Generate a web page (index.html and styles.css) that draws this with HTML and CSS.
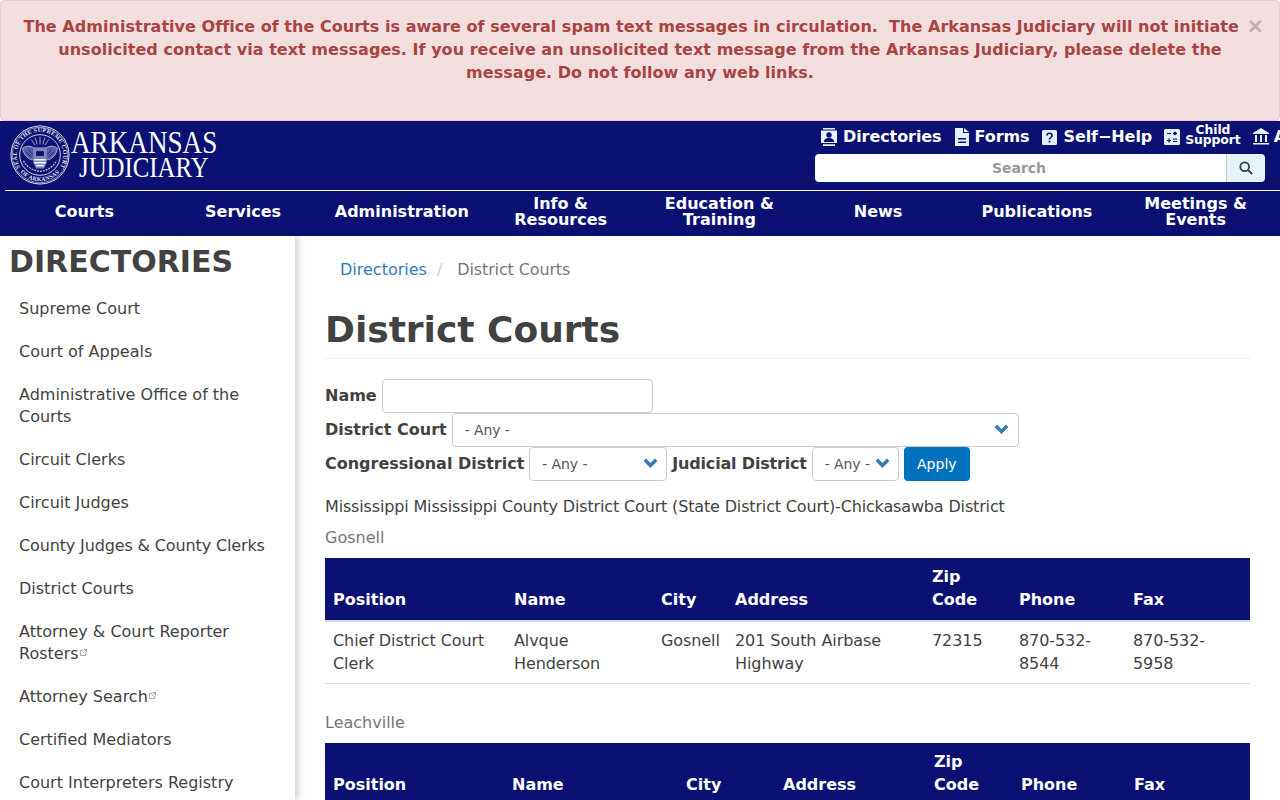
FILE: index.html
```html
<!DOCTYPE html>
<html lang="en">
<head>
<meta charset="utf-8">
<title>District Courts</title>
<link rel="stylesheet" href="styles.css">
</head>
<body>
<div class="alert">
  <span class="close">×</span>
  <p>The Administrative Office of the Courts is aware of several spam text messages in circulation.&nbsp; The Arkansas Judiciary will not initiate unsolicited contact via text messages. If you receive an unsolicited text message from the Arkansas Judiciary, please delete the message. Do not follow any web links.</p>
</div>
<header class="site-header">
  <div class="top">
    <a class="brand" href="#">
      <svg class="seal" viewBox="0 0 62 62" width="60" height="60">
        <defs>
          <path id="arcTop" d="M12.600 46.400A24 24 0 1 1 49.400 46.400"/>
          <path id="arcBot" d="M7.600 44.500A27 27 0 0 0 54.400 44.500"/>
        </defs>
        <circle cx="31" cy="31" r="30" fill="none" stroke="#e8eaf4" stroke-width="1"/>
        <circle cx="31" cy="31" r="28.600" fill="none" stroke="#e8eaf4" stroke-width=".6"/>
        <circle cx="31" cy="31" r="21" fill="none" stroke="#e8eaf4" stroke-width=".9"/>
        <text class="seal-text"><textPath href="#arcTop" startOffset="50%" text-anchor="middle">SEAL OF THE SUPREME COURT</textPath></text>
        <text class="seal-text"><textPath href="#arcBot" startOffset="50%" text-anchor="middle">OF ARKANSAS</textPath></text>
        <path d="M31 12v8M26 13l2 7M36 13l-2 7M22 15l4 6M40 15l-4 6" stroke="#9ea3cf" stroke-width="1"/>
        <path d="M13 24c4-3 10-3 14 2-1 4-2 7-3 10-5 0-10-5-11-12zM49 24c-4-3-10-3-14 2 1 4 2 7 3 10 5 0 10-5 11-12z" fill="#5a60a8" stroke="#c6cae4" stroke-width=".8"/>
        <path d="M16 27l6 6M19 25l5 6M46 27l-6 6M43 25l-5 6" stroke="#0a1172" stroke-width=".8"/>
        <path d="M24 23h14v16l-3 6h-8l-3-6z" fill="#7f85bf"/>
        <path d="M25 36h12M25 39h12M27 42h8" stroke="#f6f7fc" stroke-width="1.500"/>
        <path d="M27 27h8v5h-8z" fill="#0a1172"/>
        <path d="M14 37c3 6 9 10 17 11 8-1 14-5 17-11" fill="none" stroke="#c6cae4" stroke-width="1.200" stroke-dasharray="2 1"/>
      </svg>
      <span class="wordmark"><span class="w1">ARKANSAS</span><span class="w2">JUDICIARY</span></span>
    </a>
    <div class="tools">
      <div class="links">
        <a href="#"><svg class="ic" viewBox="0 0 16 18" width="16" height="18"><path fill="#e3f1fa" d="M2 0h12v1.500H2zM0 2.500h16V15H0zM2 16.200h12V18H2z"/><circle cx="8" cy="7" r="2.700" fill="#0a1172"/><path fill="#0a1172" d="M3 14c0-3 2-4 5-4s5 1 5 4z"/></svg>Directories</a>
        <a href="#"><svg class="ic" viewBox="0 0 14 18" width="14" height="18"><path fill="#e3f1fa" d="M0 0h8v5h6v13H0zM9 0l5 4H9z"/><path fill="#0a1172" d="M3 10h8v1.500H3zM3 13.500h8V15H3z"/></svg>Forms</a>
        <a href="#"><svg class="ic" viewBox="0 0 15 15" width="15" height="15"><rect width="15" height="15" rx="1.500" fill="#e3f1fa"/><path d="M5 5.500c0-3 5-3 5 0 0 2-2.500 2-2.500 4" fill="none" stroke="#0a1172" stroke-width="1.600"/><rect x="6.700" y="10.800" width="1.700" height="1.700" fill="#0a1172"/></svg>Self−Help</a>
        <a class="l-child" href="#"><svg class="ic" viewBox="0 0 16 16" width="16" height="16"><rect width="16" height="16" rx="1.500" fill="#e3f1fa"/><path d="M3 4.500h4M9 4.500h4M3 11.500h4M5 9.500v4M9 10h4M9 12.500h4M10 3l2 3M12 3l-2 3" stroke="#0a1172" stroke-width="1.200"/></svg><span class="stack">Child<br>Support</span></a>
        <a class="l-admin" href="#"><svg class="ic" viewBox="0 0 18 18" width="18" height="18"><path fill="#e3f1fa" d="M9 0l8 5v1H1V5zM3 7h2v7H3zM8 7h2v7H8zM13 7h2v7h-2zM1 15h16v1.500H1z"/></svg>Administration</a>
      </div>
      <form class="search">
        <input class="search-input" type="text" placeholder="Search">
        <button class="search-btn" type="button" aria-label="Search"><svg viewBox="0 0 16 16" width="14" height="14"><circle cx="6.500" cy="6.500" r="5" fill="none" stroke="#2a3b4a" stroke-width="2"/><path d="M10.500 10.500L15 15" stroke="#2a3b4a" stroke-width="2.200"/></svg></button>
      </form>
    </div>
  </div>
  <nav class="mainnav">
    <a href="#">Courts</a>
    <a href="#">Services</a>
    <a href="#">Administration</a>
    <a href="#">Info &amp; Resources</a>
    <a href="#">Education &amp; Training</a>
    <a href="#">News</a>
    <a href="#">Publications</a>
    <a href="#">Meetings &amp; Events</a>
  </nav>
</header>
<div class="layout">
  <aside class="sidebar">
    <h2>DIRECTORIES</h2>
    <ul>
      <li><a href="#">Supreme Court</a></li>
      <li><a href="#">Court of Appeals</a></li>
      <li><a href="#">Administrative Office of the Courts</a></li>
      <li><a href="#">Circuit Clerks</a></li>
      <li><a href="#">Circuit Judges</a></li>
      <li class="tight"><a href="#">County Judges &amp; County Clerks</a></li>
      <li><a href="#">District Courts</a></li>
      <li><a href="#">Attorney &amp; Court Reporter Rosters<svg class="ext" viewBox="0 0 8 8" width="8" height="8"><path d="M6.500 4.500v3h-6v-6h3M4 .5h3.500V4M7.500.5L3.500 4.500" fill="none" stroke="#777" stroke-width=".8"/></svg></a></li>
      <li><a href="#">Attorney Search<svg class="ext" viewBox="0 0 8 8" width="8" height="8"><path d="M6.500 4.500v3h-6v-6h3M4 .5h3.500V4M7.500.5L3.500 4.500" fill="none" stroke="#777" stroke-width=".8"/></svg></a></li>
      <li><a href="#">Certified Mediators</a></li>
      <li><a href="#">Court Interpreters Registry</a></li>
    </ul>
  </aside>
  <main class="content">
    <ol class="crumbs">
      <li><a href="#">Directories</a></li>
      <li class="sep">/</li>
      <li class="here">District Courts</li>
    </ol>
    <h1>District Courts</h1>
    <form class="filters">
      <div class="frow"><label>Name</label><input class="name-input" type="text"></div>
      <div class="frow"><label>District Court</label><span class="sel sel-court">- Any -<svg class="chev" viewBox="0 0 15 10" width="15" height="10"><path d="M1.800 1.800L7.500 7.500 13.200 1.800" fill="none" stroke="#337ab7" stroke-width="3.400"/></svg></span></div>
      <div class="frow"><label class="l-cong">Congressional District</label><span class="sel sel-cong">- Any -<svg class="chev" viewBox="0 0 15 10" width="15" height="10"><path d="M1.800 1.800L7.500 7.500 13.200 1.800" fill="none" stroke="#337ab7" stroke-width="3.400"/></svg></span><label class="l-jud">Judicial District</label><span class="sel sel-jud">- Any -<svg class="chev" viewBox="0 0 15 10" width="15" height="10"><path d="M1.800 1.800L7.500 7.500 13.200 1.800" fill="none" stroke="#337ab7" stroke-width="3.400"/></svg></span><button class="apply" type="button">Apply</button></div>
    </form>
    <p class="court-title">Mississippi Mississippi County District Court (State District Court)-Chickasawba District</p>
    <section class="group">
      <div class="caption">Gosnell</div>
      <table class="dir t-one">
        <colgroup><col class="c1"><col class="c2"><col class="c3"><col class="c4"><col class="c5"><col class="c6"><col class="c7"></colgroup>
        <thead><tr><th>Position</th><th>Name</th><th>City</th><th>Address</th><th>Zip Code</th><th>Phone</th><th>Fax</th></tr></thead>
        <tbody><tr><td>Chief District Court Clerk</td><td>Alvque Henderson</td><td>Gosnell</td><td>201 South Airbase Highway</td><td>72315</td><td>870-532-8544</td><td>870-532-5958</td></tr></tbody>
      </table>
    </section>
    <section class="group">
      <div class="caption">Leachville</div>
      <table class="dir t-two">
        <colgroup><col class="c1"><col class="c2"><col class="c3"><col class="c4"><col class="c5"><col class="c6"><col class="c7"></colgroup>
        <thead><tr><th>Position</th><th>Name</th><th>City</th><th>Address</th><th>Zip Code</th><th>Phone</th><th>Fax</th></tr></thead>
      </table>
    </section>
  </main>
</div>
</body>
</html>
```
FILE: styles.css
```css
* { box-sizing: border-box; }
html, body { margin: 0; height: 800px; overflow: hidden; }
body { font-family: "DejaVu Sans", sans-serif; font-size: 16px; line-height: 22.86px; color: #424242; background: #fff; }
a { text-decoration: none; color: inherit; }

.alert { height: 121px; padding: 15px; background: #f2dede; border: 1px solid #ebccd1; border-radius: 4px; color: #a94442; font-weight: 700; text-align: center; letter-spacing: .035px; }
.alert p { margin: 0; }
.close { float: right; font-size: 21px; line-height: 21px; font-weight: 700; color: #c4adad; letter-spacing: 0; }

.site-header { background: #0a1172; color: #fff; height: 115px; }
.top { display: flex; height: 70px; margin-left: 5px; border-bottom: 1px solid #fff; }
.brand { display: flex; align-items: flex-start; width: 810px; padding: 4px 0 0 5px; }
.seal { flex: none; margin-right: 1px; }
.seal-text { font-family: "Liberation Serif", serif; font-size: 6px; font-weight: 700; letter-spacing: .35px; fill: #e8eaf4; }
.wordmark { display: flex; flex-direction: column; margin: 6px 0 0; font-family: "Liberation Serif", serif; line-height: 25px; }
.w1, .w2 { display: block; width: 140px; white-space: nowrap; transform-origin: 0 50%; }
.w1 { font-size: 30.500px; transform: scaleX(.89); }
.w2 { font-size: 29px; margin: -1px 0 0 8px; transform: scaleX(.856); }
.tools { flex: 1; min-width: 0; }
.links { display: flex; gap: 13px; height: 33px; padding: 5px 0 0 6px; white-space: nowrap; font-weight: 700; overflow: hidden; font-size: 16px; letter-spacing: -.08px; }
.links a { display: flex; align-items: center; gap: 6px; height: 22px; flex: none; }
.links .l-child { margin-left: -1px; gap: 5px; }
.links .l-admin { margin-left: -2px; gap: 4px; }
.ic { flex: none; }
.stack { font-size: 12.400px; line-height: 10px; text-align: center; margin-bottom: 4px; }
.search { display: flex; width: 450px; height: 28px; }
.search-input { flex: 1; min-width: 0; border: 0; border-radius: 4px 0 0 4px; font: 700 14px "DejaVu Sans", sans-serif; text-align: center; padding: 0 3px 0 0; background: #fff; }
.search-input::placeholder { color: #999; opacity: 1; }
.search-btn { width: 39px; padding: 0; border: 0; border-left: 1px solid #ccc; border-radius: 0 4px 4px 0; background: #e8f3f9; display: flex; align-items: center; justify-content: center; }

.mainnav { display: grid; grid-template-columns: repeat(8, minmax(0, 1fr)); height: 45px; padding: 0 5px 4px; align-items: center; }
.mainnav a { font-weight: 700; line-height: 16px; text-align: center; padding: 0 8px; }

.layout { display: flex; }
.sidebar { flex: none; width: 295px; height: 564px; padding: 9px 0 0 9px; box-shadow: 3px 0 8px rgba(0,0,0,.2); }
.sidebar h2 { margin: 0 0 20px; font-size: 30px; line-height: 33px; font-weight: 700; }
.sidebar ul { margin: 0; padding: 0 20px 0 10px; list-style: none; line-height: 22px; }
.sidebar li { padding: 0 0 21px; }
.sidebar a { display: block; }
.sidebar .tight { letter-spacing: -.14px; }
.ext { margin-left: 1px; vertical-align: 3px; width: 7px; height: 7px; }

.content { flex: 1; min-width: 0; padding: 23px 30px 0; }
.crumbs { display: flex; gap: 10px; margin: 0; padding: 0 0 0 15px; list-style: none; }
.crumbs a { color: #337ab7; }
.sep { color: #ccc; margin-right: 5px; }
.here { color: #777; letter-spacing: -.13px; }
h1 { margin: 28px 0 20px; padding-bottom: 8px; border-bottom: 1px solid #eee; font-size: 36px; line-height: 40px; font-weight: 700; }

.frow { display: flex; align-items: center; height: 34px; gap: 5px; }
.frow label { font-weight: 700; padding-top: 1px; }
.frow .l-cong { letter-spacing: -.01px; }
.frow .l-jud { letter-spacing: -.18px; }
.name-input { width: 271px; height: 34px; border: 1px solid #ccc; border-radius: 4px; background: #fff; }
.sel { position: relative; display: flex; align-items: center; height: 34px; padding: 2px 0 0 12px; border: 1px solid #ccc; border-radius: 4px; font-size: 14px; letter-spacing: -.1px; color: #555; background: #fff; }
.sel-court { width: 567px; }
.sel-cong { width: 138px; }
.sel-jud { width: 87px; }
.chev { position: absolute; right: 8px; top: 10px; }
.sel-court .chev { right: 9px; }
.apply { height: 34px; width: 66px; border: 0; border-radius: 4px; background: #0071bc; color: #fff; font: 14px "DejaVu Sans", sans-serif; }

.court-title { margin: 15px 0 8px; letter-spacing: -.157px; }
.caption { color: #777; padding-bottom: 8px; }
.group { margin-bottom: 28px; }
.dir { width: 100%; border-collapse: collapse; table-layout: fixed; }
.dir th { padding: 7px 8px 9px; background: #0a1172; color: #fff; text-align: left; vertical-align: bottom; font-weight: 700; line-height: 23px; border-bottom: 2px solid #ddd; }
.dir td { padding: 7px 8px 8.700px; vertical-align: top; border-bottom: 1px solid #ddd; line-height: 23px; letter-spacing: -.08px; }
.t-one .c1 { width: 181px; }
.t-one .c2 { width: 147px; }
.t-one .c3 { width: 74px; }
.t-one .c4 { width: 197px; }
.t-one .c5 { width: 87px; }
.t-one .c6 { width: 114px; }
.t-two .c1 { width: 179px; }
.t-two .c2 { width: 174px; }
.t-two .c3 { width: 97px; }
.t-two .c4 { width: 151px; }
.t-two .c5 { width: 87px; }
.t-two .c6 { width: 113px; }
```
